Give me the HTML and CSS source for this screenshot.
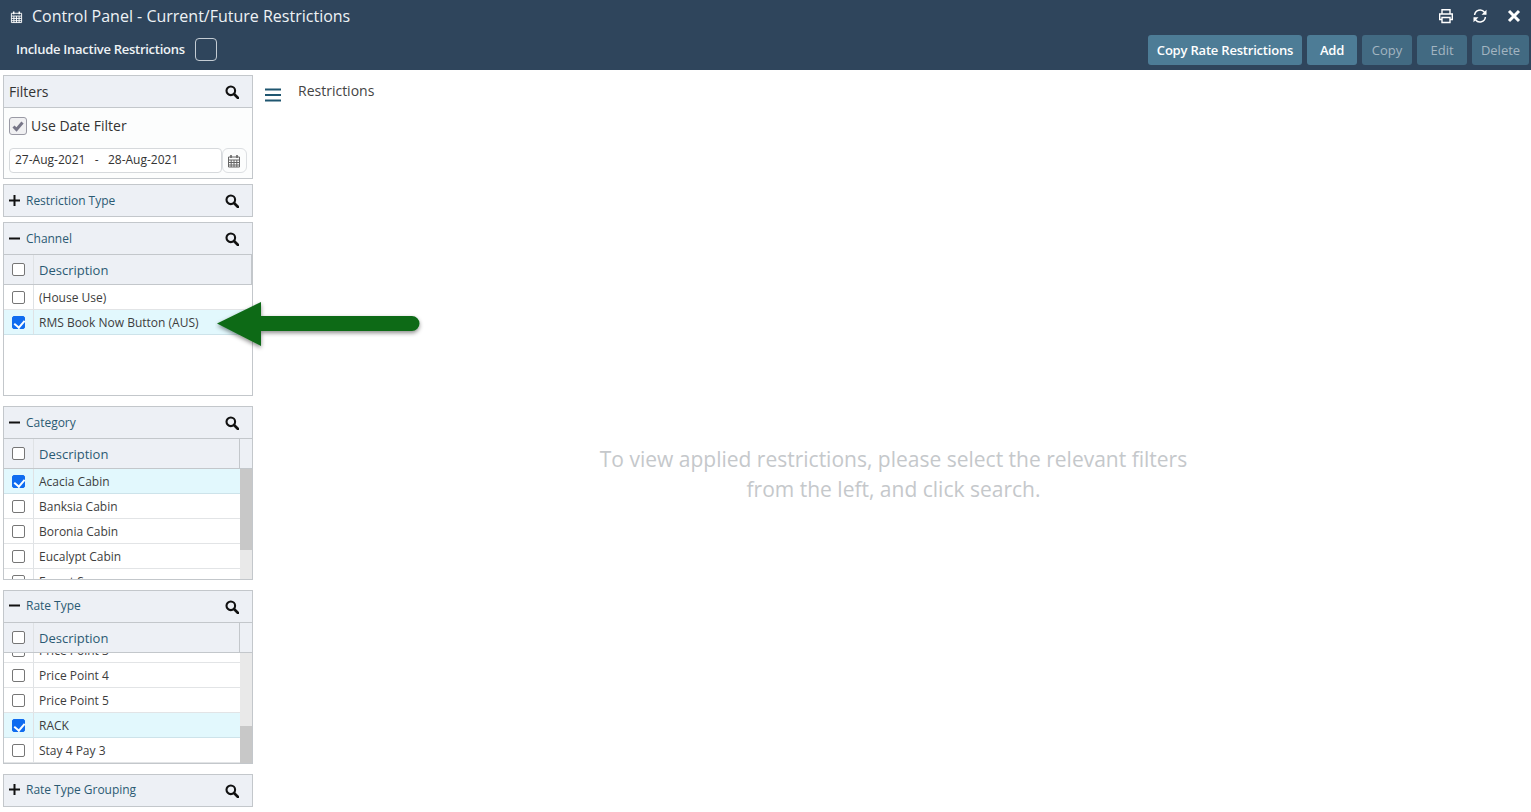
FILE: index.html
```html
<!DOCTYPE html>
<html lang="en">
<head>
<meta charset="utf-8">
<title>Control Panel - Current/Future Restrictions</title>
<link rel="stylesheet" href="styles.css">
</head>
<body>
<svg class="sprites" width="0" height="0" aria-hidden="true">
  <symbol id="i-search" viewBox="0 0 14 14"><circle cx="5.8" cy="5.8" r="4.3" fill="none" stroke="currentColor" stroke-width="2.1"/><path d="M9 9l4 4" stroke="currentColor" stroke-width="2.6" stroke-linecap="round"/></symbol>
  <symbol id="i-plus" viewBox="0 0 11 11"><path d="M5.5 0v11M0 5.5h11" stroke="currentColor" stroke-width="2"/></symbol>
  <symbol id="i-minus" viewBox="0 0 11 11"><path d="M0 5.5h11" stroke="currentColor" stroke-width="2"/></symbol>
  <symbol id="i-cal" viewBox="0 0 14 14"><path fill="none" stroke="currentColor" d="M1.500 3h11v10h-11zM1.500 6h11M1.500 8.500h11M1.500 11h11M4.200 6v7M7 6v7M9.800 6v7"/><path d="M4 1v3M10 1v3" stroke="currentColor" stroke-width="1.600"/></symbol>
</svg>
<header class="topbar">
  <div class="title-row">
    <div class="title">
      <svg class="title-icon"><use href="#i-cal"/></svg>
      <span>Control Panel - Current/Future Restrictions</span>
    </div>
    <div class="window-tools">
      <svg class="tool" viewBox="0 0 16 16"><path fill="none" stroke="currentColor" stroke-width="1.400" d="M4 6V1.700h8V6M4 11.500H1.700V6h12.600v5.500H12M4 9.500h8v5H4z"/></svg>
      <svg class="tool" viewBox="0 0 16 16"><path fill="none" stroke="currentColor" stroke-width="1.500" d="M2.600 7A5.500 5.500 0 0 1 12.500 4.300L13.800 5.600M13.400 9A5.500 5.500 0 0 1 3.500 11.700L2.200 10.400"/><path fill="currentColor" d="M14.500 1.800v5h-5zM1.500 14.200v-5h5z"/></svg>
      <svg class="tool" viewBox="0 0 16 16"><path stroke="currentColor" stroke-width="3" d="M3 3l10 10M13 3L3 13"/></svg>
    </div>
  </div>
  <div class="action-row">
    <label class="inactive">
      <span>Include Inactive Restrictions</span>
      <span class="inactive-box"></span>
    </label>
    <div class="actions">
      <button class="btn btn-wide">Copy Rate Restrictions</button>
      <button class="btn btn-add">Add</button>
      <button class="btn btn-off">Copy</button>
      <button class="btn btn-off">Edit</button>
      <button class="btn btn-off">Delete</button>
    </div>
  </div>
</header>
<div class="page">
  <aside class="sidebar">
    <section class="panel panel-filters">
      <div class="panel-head">
        <span class="filters-title">Filters</span>
        <svg class="search"><use href="#i-search"/></svg>
      </div>
      <div class="filters-body">
        <label class="date-toggle"><span class="grey-check"><svg viewBox="0 0 14 14"><path d="M2.500 7.500l3 3 6-7" fill="none" stroke="currentColor" stroke-width="3"/></svg></span>Use Date Filter</label>
        <div class="date-row">
          <div class="date-input">27-Aug-2021 &nbsp; - &nbsp; 28-Aug-2021</div>
          <div class="date-btn"><svg><use href="#i-cal"/></svg></div>
        </div>
      </div>
    </section>

    <section class="panel">
      <div class="panel-head">
        <span class="head-label"><svg class="sign"><use href="#i-plus"/></svg>Restriction Type</span>
        <svg class="search"><use href="#i-search"/></svg>
      </div>
    </section>

    <section class="panel panel-grid channel">
      <div class="panel-head">
        <span class="head-label"><svg class="sign"><use href="#i-minus"/></svg>Channel</span>
        <svg class="search"><use href="#i-search"/></svg>
      </div>
      <div class="grid-head">
        <span class="cell-check"><span class="check"></span></span>
        <span class="grid-title">Description</span>
      </div>
      <div class="grid-body">
        <div class="rows">
          <div class="row"><span class="cell-check"><span class="check"></span></span><span class="row-text">(House Use)</span></div>
          <div class="row row-on"><span class="cell-check"><span class="check check-on"></span></span><span class="row-text">RMS Book Now Button (AUS)</span></div>
        </div>
      </div>
    </section>

    <section class="panel panel-grid">
      <div class="panel-head">
        <span class="head-label"><svg class="sign"><use href="#i-minus"/></svg>Category</span>
        <svg class="search"><use href="#i-search"/></svg>
      </div>
      <div class="grid-head grid-head-scroll">
        <span class="cell-check"><span class="check"></span></span>
        <span class="grid-title">Description</span>
      </div>
      <div class="grid-body">
        <div class="rows">
          <div class="row row-on"><span class="cell-check"><span class="check check-on"></span></span><span class="row-text">Acacia Cabin</span></div>
          <div class="row"><span class="cell-check"><span class="check"></span></span><span class="row-text">Banksia Cabin</span></div>
          <div class="row"><span class="cell-check"><span class="check"></span></span><span class="row-text">Boronia Cabin</span></div>
          <div class="row"><span class="cell-check"><span class="check"></span></span><span class="row-text">Eucalypt Cabin</span></div>
          <div class="row"><span class="cell-check"><span class="check"></span></span><span class="row-text">Forest Scene</span></div>
        </div>
        <div class="scroll"><div class="thumb thumb-top"></div></div>
      </div>
    </section>

    <section class="panel panel-grid">
      <div class="panel-head">
        <span class="head-label head-up"><svg class="sign"><use href="#i-minus"/></svg>Rate Type</span>
        <svg class="search"><use href="#i-search"/></svg>
      </div>
      <div class="grid-head grid-head-scroll">
        <span class="cell-check"><span class="check"></span></span>
        <span class="grid-title">Description</span>
      </div>
      <div class="grid-body">
        <div class="rows rows-end">
          <div class="row"><span class="cell-check"><span class="check"></span></span><span class="row-text">Price Point 3</span></div>
          <div class="row"><span class="cell-check"><span class="check"></span></span><span class="row-text">Price Point 4</span></div>
          <div class="row"><span class="cell-check"><span class="check"></span></span><span class="row-text">Price Point 5</span></div>
          <div class="row row-on"><span class="cell-check"><span class="check check-on"></span></span><span class="row-text">RACK</span></div>
          <div class="row"><span class="cell-check"><span class="check"></span></span><span class="row-text">Stay 4 Pay 3</span></div>
        </div>
        <div class="scroll scroll-end"><div class="thumb thumb-bottom"></div></div>
      </div>
    </section>

    <section class="panel">
      <div class="panel-head">
        <span class="head-label head-up"><svg class="sign"><use href="#i-plus"/></svg>Rate Type Grouping</span>
        <svg class="search"><use href="#i-search"/></svg>
      </div>
    </section>
  </aside>
  <main class="content">
    <div class="content-head">
      <svg class="menu" viewBox="0 0 16 14"><path d="M0 1.500h16M0 7h16M0 12.500h16" stroke="currentColor" stroke-width="2"/></svg>
      <span class="content-title">Restrictions</span>
    </div>
    <p class="placeholder">To view applied restrictions, please select the relevant filters<br>from the left, and click search.</p>
  </main>
</div>
<svg class="arrow" width="214" height="58" viewBox="0 0 214 58" aria-hidden="true">
  <defs><filter id="arrow-shadow" x="-10%" y="-20%" width="120%" height="150%"><feDropShadow dx="0" dy="2" stdDeviation="2" flood-color="#000" flood-opacity=".45"/></filter></defs>
  <path filter="url(#arrow-shadow)" fill="#0e6a18" d="M2 24.500L46 3V17H197A7.500 7.500 0 0 1 197 32H46V47Z"/>
</svg>
</body>
</html>
```
FILE: styles.css
```css
* { box-sizing: border-box; }
html, body { margin: 0; padding: 0; }
body {
  width: 1531px;
  height: 812px;
  overflow: hidden;
  position: relative;
  background: #fff;
  font-family: "Open Sans", "Liberation Sans", sans-serif;
  color: #333;
}
.sprites { position: absolute; }

.topbar {
  height: 70px;
  background: #2f455c;
  color: #fff;
  display: flex;
  flex-direction: column;
}
.title-row {
  height: 35px;
  display: flex;
  align-items: center;
  justify-content: space-between;
  padding: 0 9px 3px 10px;
}
.title { display: flex; align-items: center; gap: 9px; font-size: 16px; color: #eef2f5; }
.title-icon { width: 13px; height: 14px; margin-top: 2px; color: #fff; }
.window-tools { display: flex; align-items: center; gap: 18px; }
.tool { width: 16px; height: 16px; color: #fff; }
.action-row {
  height: 35px;
  display: flex;
  align-items: flex-start;
  justify-content: space-between;
  padding-left: 16px;
  padding-right: 2px;
}
.inactive { display: flex; align-items: center; gap: 10px; height: 26px; font-size: 13px; font-weight: 600; letter-spacing: -.27px; margin-top: 1px; color: #eef2f5; }
.inactive-box { width: 22px; height: 23px; border: 1px solid #c4ccd3; border-radius: 4px; }
.actions { display: flex; gap: 5px; }
.btn {
  height: 30px;
  border: 0;
  border-radius: 3px;
  padding: 0;
  background: #4d7c96;
  color: #fff;
  font: 600 13px "Open Sans", "Liberation Sans", sans-serif;
  letter-spacing: -.2px;
}
.btn-wide { width: 154px; }
.btn-add { width: 50px; }
.btn-off { width: 50px; background: #426a82; color: #a3b5c1; font-weight: 400; letter-spacing: 0; }
.btn-off:last-child { width: 57px; }

.page { display: flex; height: 742px; }
.sidebar {
  width: 250px;
  margin: 5px 0 0 3px;
  display: flex;
  flex-direction: column;
  flex: none;
}
.panel { border: 1px solid #c3c7cb; margin-bottom: 5px; background: #fff; }
.panel-head {
  height: 31px;
  background: #edf0f5;
  display: flex;
  align-items: center;
  justify-content: space-between;
  padding: 0 13px 0 5px;
}
.filters-title { font-size: 14px; color: #333; }
.search { width: 14px; height: 14px; color: #111; }
.head-label { display: flex; align-items: center; font-size: 12px; color: #2b5a73; letter-spacing: -.02px; }
.head-up { margin-bottom: 2px; }
.sign { width: 11px; height: 11px; margin-right: 6px; color: #111; }
.filters-body { border-top: 1px solid #c3c7cb; background: #fcfdfd; height: 71px; padding: 7px 5px 0; }
.date-toggle { display: flex; align-items: center; gap: 4px; font-size: 14px; color: #333; height: 20px; }
.grey-check {
  width: 18px;
  height: 18px;
  margin-top: 1px;
  border: 1px solid #9a9aa5;
  border-radius: 3px;
  background: #f0f0f2;
  color: #777688;
  display: flex;
  align-items: center;
  justify-content: center;
}
.grey-check svg { width: 14px; height: 14px; }
.date-row { display: flex; margin-top: 13px; }
.date-input {
  width: 213px;
  height: 25px;
  border: 1px solid #d6d9dc;
  border-radius: 4px;
  background: #fff;
  font-size: 12px;
  line-height: 21px;
  padding-left: 5px;
  color: #333;
}
.date-btn {
  width: 25px;
  height: 25px;
  border: 1px solid #dcdfe2;
  border-radius: 6px;
  display: flex;
  align-items: center;
  justify-content: center;
  padding-right: 2px;
  color: #666;
}
.date-btn svg { width: 14px; height: 14px; }

.panel-grid { height: 174px; display: flex; flex-direction: column; margin-bottom: 10px; }
.channel { margin-bottom: 10px; }
.grid-head {
  height: 31px;
  flex: none;
  background: #edf0f5;
  border-top: 1px solid #c3c7cb;
  border-bottom: 1px solid #c3c7cb;
  border-right: 1px solid #c3c7cb;
  display: flex;
  align-items: center;
}
.grid-head-scroll { margin-right: 12px; position: relative; }
.grid-head-scroll::after {
  content: "";
  position: absolute;
  left: 100%;
  top: -1px;
  bottom: -1px;
  width: 12px;
  margin-left: 1px;
  background: #edf0f5;
  border-top: 1px solid #c3c7cb;
  border-bottom: 1px solid #c3c7cb;
}
.cell-check {
  width: 30px;
  height: 100%;
  flex: none;
  border-right: 1px solid #dfe2e5;
  display: flex;
  align-items: center;
  justify-content: center;
}
.grid-title { font-size: 13px; color: #2b5a73; padding-left: 5px; }
.check {
  display: block;
  width: 13px;
  height: 13px;
  border: 1px solid #767676;
  border-radius: 2px;
  background: #fff;
}
.check-on {
  border-color: #0f6cf0;
  background: #0f6cf0;
  position: relative;
}
.check-on::after {
  content: "";
  position: absolute;
  left: 3px;
  top: 1px;
  width: 5px;
  height: 8px;
  border: solid #fff;
  border-width: 0 2px 2px 0;
  transform: rotate(40deg);
}
.grid-body { flex: 1; min-height: 0; display: flex; overflow: hidden; }
.rows { flex: 1; min-width: 0; display: flex; flex-direction: column; }
.rows-end { justify-content: flex-end; }
.row {
  height: 25px;
  flex: none;
  display: flex;
  align-items: center;
  border-bottom: 1px solid #e2e4e6;
}
.row-on { background: #e2f8fd; border-bottom-color: #cde3ea; }
.row-text { font-size: 12px; color: #3d3d3d; padding-left: 5px; }
.scroll { width: 12px; flex: none; background: #e9e9e9; }
.scroll-end { display: flex; flex-direction: column; justify-content: flex-end; }
.thumb { background: #c8c8c8; }
.thumb-top { height: 81px; }
.thumb-bottom { height: 37px; }

.content { flex: 1; position: relative; }
.content-head { display: flex; align-items: flex-start; padding: 12px 0 0 12px; }
.menu { width: 16px; height: 14px; color: #1f5670; margin-top: 6px; flex: none; }
.content-title { font-size: 14px; margin-left: 17px; color: #444; line-height: 17px; }
.placeholder {
  position: absolute;
  left: 3px;
  right: 0;
  top: 374px;
  margin: 0;
  text-align: center;
  font-size: 21px;
  line-height: 30px;
  color: #c5c8cb;
}
.arrow { position: absolute; left: 215px; top: 299px; }
```
